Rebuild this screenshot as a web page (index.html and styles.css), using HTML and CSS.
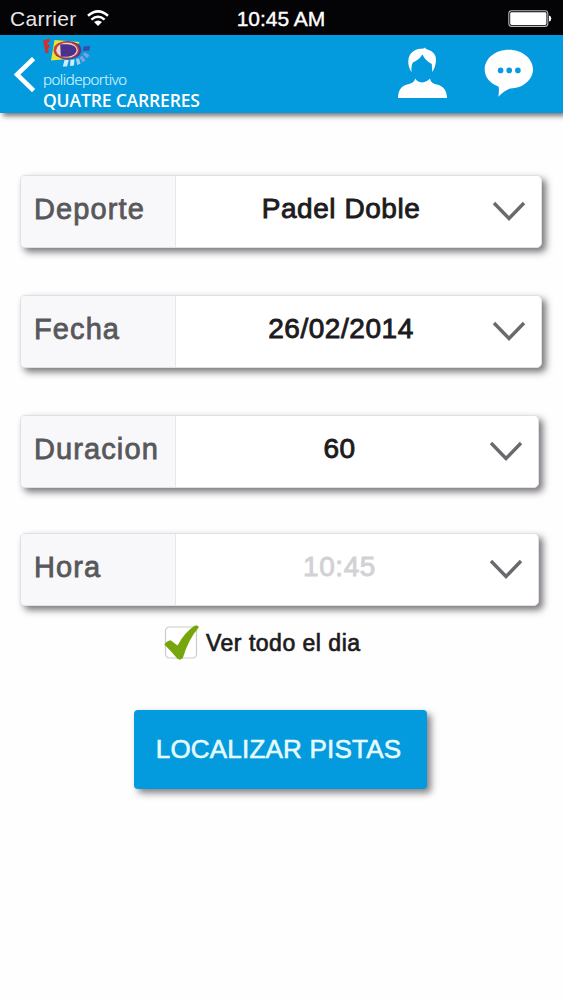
FILE: index.html
```html
<!DOCTYPE html>
<html lang="es">
<head>
<meta charset="utf-8">
<title>Polideportivo Quatre Carreres</title>
<link rel="stylesheet" href="styles.css">
</head>
<body>
<div class="status">
  <div class="status-left"><span class="carrier">Carrier</span>
    <svg class="wifi" width="22" height="17" viewBox="0 0 22 17" fill="none" stroke="#fff" stroke-width="2.5"><path d="M1 5.8Q11-3 21 5.8M4.4 9.6Q11 4 17.6 9.6"/><path d="M7 12Q11 8.8 15 12L11 16Z" fill="#fff" stroke="none"/></svg>
  </div>
  <span class="clock">10:45 AM</span>
  <svg class="battery" width="44" height="18" viewBox="0 0 44 18"><rect x=".8" y=".8" width="39" height="15.6" rx="2.8" fill="none" stroke="#bbb" stroke-width="1.1"/><rect x="2.2" y="2.2" width="36.2" height="12.8" rx="1.4" fill="#fff"/><path d="M41 5.6q2.3.4 2.3 3t-2.3 3z" fill="#fff"/></svg>
</div>
<header class="header">
  <svg class="back" width="22" height="36" viewBox="0 0 22 36" fill="none" stroke="#fff" stroke-width="4.6"><path d="M19.6 1.6 3 17.5 19.6 33.6"/></svg>
  <div class="brand">
    <svg class="emblem" width="48" height="30" viewBox="0 0 48 30">
      <path d="M0 2.5 6.4.5 7 3.7 4.3 4.5 4.6 7 6.5 6.5 6.8 9.3 5 9.9 5.8 14.5 2.8 15.5Z" fill="#d2302d"/>
      <path d="M11.5 2 36.5 4 31 12 25 21 8 22.5Z" fill="#e8e52c"/>
      <ellipse cx="24.5" cy="12.2" rx="13.8" ry="9.3" fill="#5b358c"/>
      <ellipse cx="23.5" cy="12" rx="12.6" ry="8.6" fill="#d8402b"/>
      <ellipse cx="24" cy="12.2" rx="10.8" ry="7.4" fill="#e6d8d5"/>
      <path d="M17.2 6.2H25Q33.5 7.4 33.5 12.2T25 18.8H17.8Z" fill="#4c318c"/>
      <path d="M40.5 8.5 47 8 46.3 12.6 40 13Z" fill="#374cae"/>
      <path d="m21.5 22 4.3-.1-1.7 6.5-4.3.2zM27.5 21.8l4-.4-.5 6-4 .6z" fill="#cceef8"/>
      <path d="m33 21 2.9-.8 1.7 5.6-3.5 1.1z" fill="#a7cef0"/>
      <path d="m36.4 19.5 2.8-1.7 3.4 4.8-3.1 2zM39.8 16.5l2-2.2 4.7 3-2.3 3z" fill="#829ed8"/>
    </svg>
    <span class="brand-small">polideportivo</span>
    <span class="brand-name">QUATRE CARRERES</span>
  </div>
  <div class="actions">
    <svg class="user" width="50" height="52" viewBox="0 0 50 52" fill="#fff"><path d="M14.5 25.2C10 18 10 8.5 16 4.4 19 2 23 1.8 26.6 1.6L28 .5 29 2C37 4 40 9 38.8 15.5 38.3 19 37.3 22 35.2 25L34.8 17Q29 14.5 25.4 7.5 22 13 16 15.5 14 18 14.5 25.2Z"/><path d="M1 51C1.3 43 4 39.2 10 37.5 14 36.4 17 35.8 18.2 31.4Q20 34.8 25 35.4 30 34.8 33 31.4C34 35.8 36 36.4 40 37.5 46.6 39.2 49.7 43 50 51Z"/></svg>
    <svg class="chat" width="50" height="50" viewBox="0 0 50 50"><path d="M24.7.8C38 .8 49 9.5 49 20.3S38 39.8 26 39.5C22 41 18 44 14.4 47.8Q15.2 42 14.7 37.7C6 34.5.7 28.3.7 20.3.7 9.5 11.5.8 24.7.8Z" fill="#fff"/><g fill="#079ade"><circle cx="16.6" cy="21.4" r="2.8"/><circle cx="25.2" cy="21.4" r="2.8"/><circle cx="33.9" cy="21.4" r="2.8"/></g></svg>
  </div>
</header>
<main class="form">
  <div class="field">
    <span class="label">Deporte</span><span class="value">Padel Doble</span>
    <svg class="chevron" width="34" height="21" viewBox="0 0 34 21"><path d="M2 2 17 17.5 32 2"/></svg>
  </div>
  <div class="field">
    <span class="label">Fecha</span><span class="value">26/02/2014</span>
    <svg class="chevron" width="34" height="21" viewBox="0 0 34 21"><path d="M2 2 17 17.5 32 2"/></svg>
  </div>
  <div class="field field-narrow">
    <span class="label">Duracion</span><span class="value">60</span>
    <svg class="chevron" width="34" height="21" viewBox="0 0 34 21"><path d="M2 2 17 17.5 32 2"/></svg>
  </div>
  <div class="field field-narrow field-last">
    <span class="label">Hora</span><span class="value value-off">10:45</span>
    <svg class="chevron" width="34" height="21" viewBox="0 0 34 21"><path d="M2 2 17 17.5 32 2"/></svg>
  </div>
  <div class="check-row">
    <svg class="check" width="36" height="36" viewBox="0 0 36 36"><rect x="1.5" y="2" width="31" height="31" rx="4" fill="#fff" stroke="#cbcbd0" stroke-width="1.2"/><path d="M.3 19.5Q3 15.7 6.6 15.2L13.5 20.5Q20.5 7.5 30.5.8 34.8-.4 34.7 2.4 24.5 14 18.9 32.8 16.5 36 13.3 33.6 7 26 .3 19.5Z" fill="#76a60b"/></svg>
    <span class="check-text">Ver todo el dia</span>
  </div>
  <button class="submit">LOCALIZAR PISTAS</button>
</main>
</body>
</html>
```

FILE: styles.css
```css
* { box-sizing: border-box; }
body {
  margin: 0;
  height: 1000px;
  overflow: hidden;
  background: #fefefe;
  font-family: "Liberation Sans", Arial, sans-serif;
}
svg { display: block; flex: none; }
.status {
  display: grid;
  grid-template-columns: 1fr auto 1fr;
  align-items: center;
  height: 35px;
  padding: 2px 11px 0 10px;
  background: #040306;
  color: #fff;
  font-size: 21px;
}
.status-left { display: flex; align-items: center; gap: 10px; }
.carrier { letter-spacing: .35px; color: #e8e8e8; }
.clock { letter-spacing: 0; -webkit-text-stroke: .4px #fff; }
.battery { justify-self: end; }
.header {
  display: flex;
  height: 78px;
  padding-left: 14px;
  background: #039ade;
  box-shadow: 3px 3px 5px rgba(50, 45, 50, .65);
  color: #fff;
}
.back { margin-top: 22px; }
.brand { display: flex; flex-direction: column; width: 170px; margin-left: 7px; }
.emblem { margin-top: 3px; }
.brand-small {
  font: 300 15px/18px "Open Sans", sans-serif;
  letter-spacing: -.45px;
  margin-top: 2px;
  color: #d8f3ff;
  -webkit-text-stroke: .2px #d8f3ff;
}
.brand-name {
  font: 600 17.5px/20px "Open Sans", sans-serif;
  letter-spacing: -.15px;
  margin-top: 2px;
  white-space: nowrap;
}
.actions { display: flex; margin-left: auto; padding-right: 29px; gap: 37px; }
.user { margin-top: 12px; }
.chat { margin-top: 14px; }
.form { display: flex; flex-direction: column; padding: 62px 21px 0 20px; }
.field {
  display: flex;
  width: 522px;
  height: 73px;
  margin-bottom: 47px;
  border: 1px solid #e2e0e4;
  border-radius: 5px;
  background: #fff;
  box-shadow: 4px 4px 7px rgba(50, 45, 52, .65);
}
.field-narrow { width: 519px; margin-bottom: 45px; }
.field-last { margin-bottom: 19px; }
.label {
  width: 155px;
  padding-left: 13px;
  border-right: 1px solid #e8e6ea;
  border-radius: 4px 0 0 4px;
  background: #f8f7fa;
  color: #58575a;
  font-size: 29px;
  line-height: 67px;
  letter-spacing: 1.1px;
  -webkit-text-stroke: .8px #58575a;
}
.value {
  flex: 1;
  padding: 0 2px 0 16px;
  text-align: center;
  color: #1d1b20;
  font-size: 28px;
  line-height: 66px;
  letter-spacing: .55px;
  -webkit-text-stroke: .9px #1d1b20;
}
.value-off { color: #d2d1d5; -webkit-text-stroke-color: #d2d1d5; }
.chevron {
  margin: 25px 15px 0 0;
  fill: none;
  stroke: #6b696d;
  stroke-width: 3.4;
}
.check-row { display: flex; gap: 6px; margin-left: 144px; height: 36px; }
.check-text {
  color: #1d1b20;
  font-size: 23px;
  line-height: 37px;
  letter-spacing: .5px;
  -webkit-text-stroke: .7px #1d1b20;
}
.submit {
  width: 293px;
  height: 79px;
  margin: 49px 0 0 114px;
  padding: 0 4px 0 0;
  border: 0;
  border-radius: 4px;
  background: #039ade;
  box-shadow: 4px 4px 7px rgba(50, 45, 52, .6);
  color: #e6fbff;
  font: 26px "Liberation Sans", Arial, sans-serif;
  letter-spacing: .2px;
  white-space: nowrap;
  -webkit-text-stroke: .6px #e6fbff;
}
```
